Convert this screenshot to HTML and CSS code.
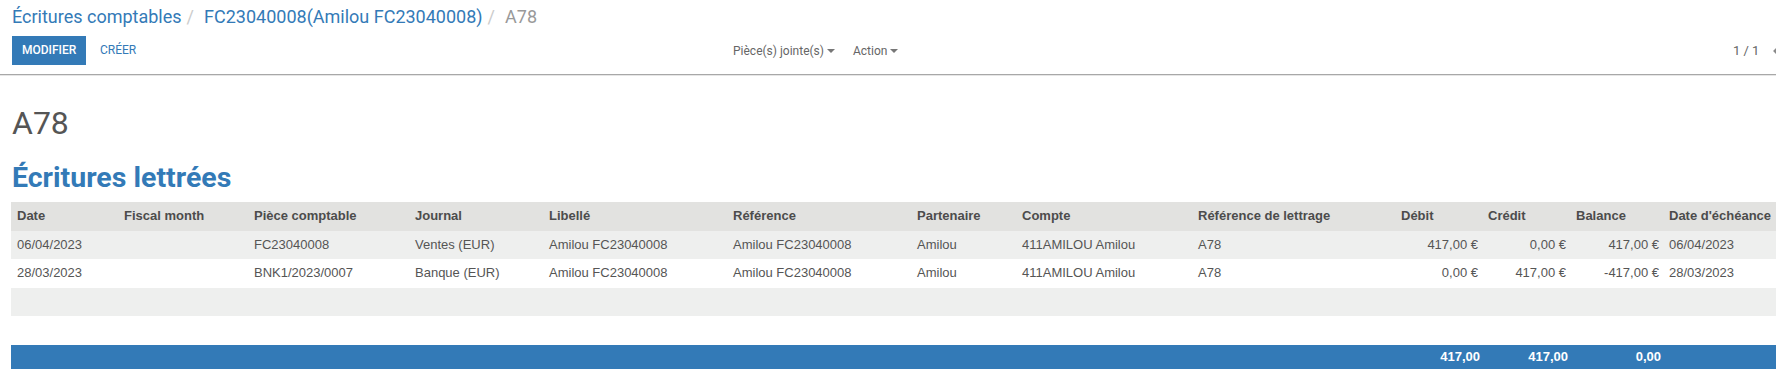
FILE: index.html
```html
<!DOCTYPE html>
<html lang="fr">
<head>
<meta charset="utf-8">
<title>A78</title>
<link rel="stylesheet" href="styles.css">
</head>
<body>
<div class="page">
  <header class="cp">
    <ol class="breadcrumb">
      <li class="crumb"><a>Écritures comptables</a></li>
      <li class="crumb"><a>FC23040008(Amilou FC23040008)</a></li>
      <li class="crumb active">A78</li>
    </ol>
    <div class="cp-bottom">
      <div class="cp-left">
        <button class="btn btn-primary">MODIFIER</button>
        <button class="btn btn-link">CRÉER</button>
      </div>
      <div class="sidebar">
        <span class="dd">Pièce(s) jointe(s)<span class="caret"></span></span>
        <span class="dd">Action<span class="caret"></span></span>
      </div>
      <div class="pager">
        <span class="pager-value">1 / 1</span>
        <span class="pager-btn"><svg class="chev" viewBox="0 0 8 12" width="8" height="12" aria-hidden="true"><path d="M6.5 1 L1.5 6 L6.5 11" fill="none" stroke="#8a8a8a" stroke-width="2"/></svg></span>
        <span class="pager-btn"><svg class="chev" viewBox="0 0 8 12" width="8" height="12" aria-hidden="true"><path d="M1.5 1 L6.5 6 L1.5 11" fill="none" stroke="#8a8a8a" stroke-width="2"/></svg></span>
      </div>
    </div>
  </header>

  <main class="sheet">
    <h1 class="title">A78</h1>
    <h2 class="subtitle">Écritures lettrées</h2>
    <table class="grid">
      <colgroup>
        <col class="c-date"><col class="c-fiscal"><col class="c-piece"><col class="c-journal">
        <col class="c-libelle"><col class="c-ref"><col class="c-partner"><col class="c-compte">
        <col class="c-lettrage"><col class="c-debit"><col class="c-credit"><col class="c-balance">
        <col class="c-echeance">
      </colgroup>
      <thead>
        <tr>
          <th>Date</th><th>Fiscal month</th><th>Pièce comptable</th><th>Journal</th>
          <th>Libellé</th><th>Référence</th><th>Partenaire</th><th>Compte</th>
          <th>Référence de lettrage</th><th>Débit</th><th>Crédit</th><th>Balance</th><th>Date d'échéance</th>
        </tr>
      </thead>
      <tbody>
        <tr>
          <td>06/04/2023</td><td></td><td>FC23040008</td><td>Ventes (EUR)</td>
          <td>Amilou FC23040008</td><td>Amilou FC23040008</td><td>Amilou</td><td>411AMILOU Amilou</td>
          <td>A78</td><td class="num">417,00 €</td><td class="num">0,00 €</td><td class="num">417,00 €</td><td>06/04/2023</td>
        </tr>
        <tr>
          <td>28/03/2023</td><td></td><td>BNK1/2023/0007</td><td>Banque (EUR)</td>
          <td>Amilou FC23040008</td><td>Amilou FC23040008</td><td>Amilou</td><td>411AMILOU Amilou</td>
          <td>A78</td><td class="num">0,00 €</td><td class="num">417,00 €</td><td class="num">-417,00 €</td><td>28/03/2023</td>
        </tr>
        <tr class="empty"><td colspan="13">&nbsp;</td></tr>
        <tr class="empty"><td colspan="13">&nbsp;</td></tr>
      </tbody>
      <tfoot>
        <tr>
          <td></td><td></td><td></td><td></td><td></td><td></td><td></td><td></td><td></td>
          <td class="num">417,00</td><td class="num">417,00</td><td class="num">0,00</td><td></td>
        </tr>
      </tfoot>
    </table>
  </main>
</div>
</body>
</html>
```

FILE: styles.css
```css
html, body {
  margin: 0;
  padding: 0;
  background: #ffffff;
  overflow: hidden;
}

body {
  font-family: Roboto, "Liberation Sans", Arial, sans-serif;
  color: #4c4c4c;
  width: 1776px;
}

.page {
  width: 1900px;
}

/* ---------- control panel ---------- */
.cp {
  padding: 4px 0 0 12px;
  height: 70px;
  border-bottom: 1px solid #a8a8a8;
  box-shadow: 0 1px 0 #e6e6e6;
}

.breadcrumb {
  list-style: none;
  margin: 0;
  padding: 0;
  display: flex;
  font-size: 18px;
  line-height: 26px;
  height: 26px;
}

.crumb a {
  color: #337ab7;
}

.crumb + .crumb::before {
  content: "/";
  color: #cccccc;
  padding: 0 10px 0 5px;
}

.crumb.active {
  color: #999999;
}

.cp-bottom {
  display: flex;
  align-items: center;
  margin-top: 6px;
  height: 29px;
}

.cp-left {
  flex: 0 0 709px;
  display: flex;
  align-items: center;
}

.btn {
  font-family: Roboto, "Liberation Sans", Arial, sans-serif;
  font-size: 12px;
  line-height: 19px;
  padding: 5px 10px;
  border: 0;
  border-radius: 0;
  cursor: pointer;
  text-transform: uppercase;
}

.btn-primary {
  background: #337ab7;
  color: #ffffff;
  width: 74px;
  font-weight: 500;
}

.btn-link {
  background: transparent;
  color: #337ab7;
  margin-left: 4px;
}

.sidebar {
  flex: 0 0 1012px;
  display: flex;
  align-items: center;
}

.dd {
  font-size: 12px;
  color: #666666;
  padding: 0 9px 0 12px;
  display: flex;
  align-items: center;
}

.dd + .dd {
  padding-left: 9px;
}

.caret {
  display: inline-block;
  width: 0;
  height: 0;
  margin-left: 3px;
  border-top: 4px solid #777777;
  border-left: 4px solid transparent;
  border-right: 4px solid transparent;
}

.pager {
  display: flex;
  align-items: center;
  font-size: 13px;
  color: #666666;
}

.pager-value {
  margin-right: 7px;
}

.pager-btn {
  display: flex;
  align-items: center;
  padding: 0 7px;
}

.chev {
  display: block;
}

/* ---------- sheet ---------- */
.sheet {
  padding: 0 0 0 11px;
}

.title {
  margin: 31px 0 0 1px;
  font-size: 32px;
  font-weight: 400;
  line-height: 35px;
  color: #555555;
}

.subtitle {
  margin: 22px 0 0 1px;
  font-size: 28.5px;
  font-weight: 700;
  line-height: 30px;
  color: #337ab7;
}

.grid {
  margin-top: 9px;
  border-collapse: collapse;
  table-layout: fixed;
  width: 1782px;
  font-family: "Liberation Sans", Arial, sans-serif;
  font-size: 13px;
  line-height: 18.57px;
  color: #555555;
}

.c-date { width: 107px; }
.c-fiscal { width: 130px; }
.c-piece { width: 161px; }
.c-journal { width: 134px; }
.c-libelle { width: 184px; }
.c-ref { width: 184px; }
.c-partner { width: 105px; }
.c-compte { width: 176px; }
.c-lettrage { width: 203px; }
.c-debit { width: 87px; }
.c-credit { width: 88px; }
.c-balance { width: 93px; }
.c-echeance { width: 130px; }

.grid th,
.grid td {
  padding: 5px 6px;
  text-align: left;
  white-space: nowrap;
  overflow: hidden;
}

.grid thead th {
  background: #e2e2e0;
  color: #4c4c4c;
  font-weight: 700;
  height: 18px;
}

.grid tbody tr:nth-child(odd) {
  background: #eeefee;
}

.grid tbody tr:nth-child(even) {
  background: #ffffff;
}

.grid .num {
  text-align: right;
  padding-right: 4px;
}

.grid tfoot td {
  background: #337ab7;
  color: #ffffff;
  font-weight: 700;
  padding-top: 3px;
  padding-bottom: 3px;
}

.grid tfoot .num {
  padding-right: 2px;
}
```
